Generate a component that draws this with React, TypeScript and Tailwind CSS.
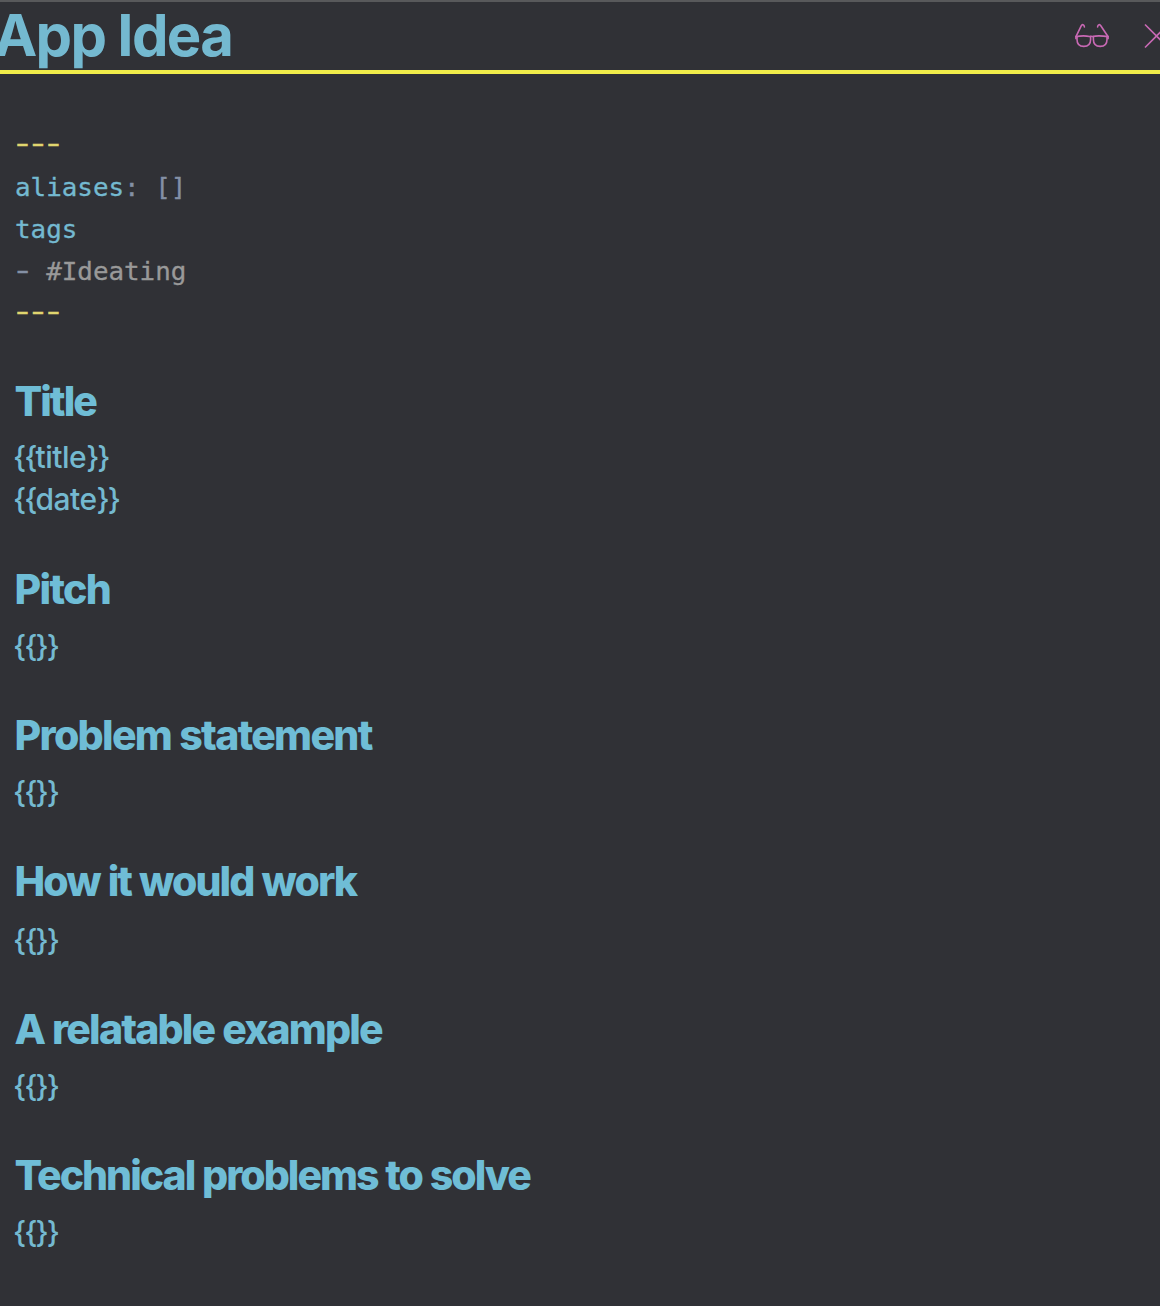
import React from "react";

type Section = {
  heading: string;
  words: string[];
  headingHeight: string;
  sectionHeight: string;
  tracking: string;
};

const sections: Section[] = [
  { heading: "Title", words: ["title", "date"], headingHeight: "h-[60px]", sectionHeight: "h-[188px]", tracking: "tracking-[-2px]" },
  { heading: "Pitch", words: [""], headingHeight: "h-[61px]", sectionHeight: "h-[146px]", tracking: "tracking-[-1.7px]" },
  { heading: "Problem statement", words: [""], headingHeight: "h-[61px]", sectionHeight: "h-[146px]", tracking: "tracking-[-1.7px]" },
  { heading: "How it would work", words: [""], headingHeight: "h-[63px]", sectionHeight: "h-[148px]", tracking: "tracking-[-1.9px]" },
  { heading: "A relatable example", words: [""], headingHeight: "h-[61px]", sectionHeight: "h-[146px]", tracking: "tracking-[-1.85px]" },
  { heading: "Technical problems to solve", words: [""], headingHeight: "h-[61px]", sectionHeight: "h-[146px]", tracking: "tracking-[-2px]" },
];

function Glasses() {
  return (
    <svg className="h-[34px] w-[42px] shrink-0" viewBox="0 0 42 34" fill="none" stroke="#c869b4" strokeWidth="1.6" strokeLinecap="round" strokeLinejoin="round">
      <path d="M14.4 9C14.2 6.4 12.2 5.9 11.2 7.8L6.2 18.2M27.6 9C27.8 6.4 29.8 5.9 30.8 7.8L37.8 18.2" />
      <path d="M5.8 18.6C10 17.9 17 17.9 19.5 18.6Q21 18 22.5 18.6C25 17.9 33 17.9 38.2 18.6M5.9 18.6V20.6M38.1 18.6V20.6" />
      <path d="M7 18.6V21.5C7 26 9.6 28.4 13.8 28.4S20.6 26 20.6 21.5V18.6M23.4 18.6V21.5C23.4 26 26 28.4 30.2 28.4S37 26 37 21.5V18.6" />
    </svg>
  );
}

function Dashes({ children }: { children: string }) {
  return <span className="relative -top-[2px] -left-[4px] inline-block origin-left scale-x-[1.5] tracking-[-4.82px]">{children}</span>;
}

export default function App() {
  return (
    <div className="flex h-[1306px] w-full flex-col overflow-hidden bg-[#303136] font-['Inter',sans-serif] text-[#74b9d0]">
      <header className="flex h-[74px] shrink-0 justify-between border-t-2 border-b-4 border-t-[#58595b] border-b-[#f0ec4a]">
        <h1 className="-ml-[6px] h-[68px] text-[58px] leading-[66px] font-bold tracking-[-1.7px] whitespace-nowrap">App Idea</h1>
        <div className="flex pt-4">
          <Glasses />
          <svg className="ml-[32px] h-[34px] w-[16px] shrink-0" viewBox="0 0 16 34" fill="none" stroke="#c869b4" strokeWidth="1.6">
            <path d="M1 6.5L24 29.5M1 29.5L24 6.5" />
          </svg>
        </div>
      </header>
      <main className="flex flex-col pl-[15px] pt-[51px]">
        <div className="h-[251px] w-[400px] origin-left scale-x-[1.078] font-['DejaVu_Sans_Mono',monospace] text-[24px] leading-[42px] whitespace-pre [-webkit-text-stroke:0.3px_currentColor]">
          <p className="text-[#e0d66f]"><Dashes>---</Dashes></p>
          <p>aliases<span className="text-[#8490a5]">: []</span></p>
          <p>tags</p>
          <p className="text-[#999999]"><span className="relative -top-px inline-block origin-center scale-x-[1.5] text-[#8490a5]">-</span> #Ideating</p>
          <p className="text-[#e0d66f]"><Dashes>---</Dashes></p>
        </div>
        {sections.map((s) => (
          <section key={s.heading} className={s.sectionHeight}>
            <h2 className={`${s.headingHeight} ${s.tracking} -ml-[0.5px] text-[41px] leading-[50px] font-extrabold whitespace-nowrap text-[#6fbdd6] [word-spacing:0.8px]`}>{s.heading}</h2>
            {s.words.map((word) => (
              <p key={word} className="-ml-[2px] text-[30px] leading-[42px] font-[450] tracking-[-2px]">
                {"{{"}
                <span className="tracking-[-0.5px]">{word}</span>
                {"}}"}
              </p>
            ))}
          </section>
        ))}
      </main>
    </div>
  );
}
